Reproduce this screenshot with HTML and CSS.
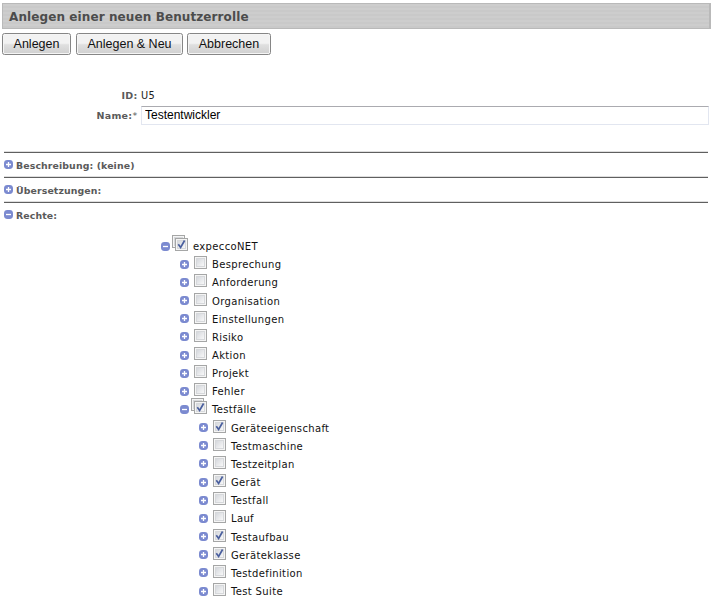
FILE: index.html
```html
<!DOCTYPE html>
<html lang="de">
<head>
<meta charset="utf-8">
<title>Anlegen einer neuen Benutzerrolle</title>
<link rel="stylesheet" href="styles.css">
</head>
<body>
<svg class="defs" width="0" height="0">
  <defs>
    <linearGradient id="fill" x1="0" y1="0" x2="1" y2="1"><stop offset="0" stop-color="#d3d6db"/><stop offset="1" stop-color="#fafafa"/></linearGradient>
    <symbol id="plus" viewBox="0 0 9 9"><rect width="9" height="9" rx="3.4" fill="#7b8ad0"/><path d="M2 4.5h5M4.5 2v5" stroke="#fff" stroke-width="1.3"/></symbol>
    <symbol id="minus" viewBox="0 0 9 9"><rect width="9" height="9" rx="3.4" fill="#7b8ad0"/><path d="M2 4.5h5" stroke="#fff" stroke-width="1.3"/></symbol>
    <symbol id="off" viewBox="0 0 13 13"><rect x=".5" y=".5" width="12" height="12" fill="#f5f5f5" stroke="#a5a6a6"/><rect x="2.5" y="2.5" width="8" height="8" fill="url(#fill)" stroke="#d6d8db"/></symbol>
    <symbol id="on" viewBox="0 0 13 13"><use href="#off" width="13" height="13"/><path d="M3.3 6.2L5.6 9.4L9.6 2.5" fill="none" stroke="#4a5f9e" stroke-width="1.7"/></symbol>
  </defs>
</svg>
<h1 class="title">Anlegen einer neuen Benutzerrolle</h1>
<div class="toolbar">
  <button class="w1">Anlegen</button><button class="w2">Anlegen &amp; Neu</button><button class="w3">Abbrechen</button>
</div>
<div class="form">
  <span class="label">ID:</span><span class="value">U5</span>
  <label class="label" for="name">Name:<span class="required">*</span></label><input id="name" value="Testentwickler">
</div>
<div class="section"><svg class="toggle"><use href="#plus"/></svg><span>Beschreibung: (keine)</span></div>
<div class="section"><svg class="toggle"><use href="#plus"/></svg><span>Übersetzungen:</span></div>
<div class="section"><svg class="toggle"><use href="#minus"/></svg><span>Rechte:</span></div>
<ul class="tree" id="tree"></ul>
<script src="tree.js"></script>
</body>
</html>
```
FILE: tree.js
```js
// [level, label, checked, expanded]
const rows = [
  [0, "expeccoNET", 1, 1],
  [1, "Besprechung"], [1, "Anforderung"], [1, "Organisation"], [1, "Einstellungen"],
  [1, "Risiko"], [1, "Aktion"], [1, "Projekt"], [1, "Fehler"],
  [1, "Testfälle", 1, 1],
  [2, "Geräteeigenschaft", 1], [2, "Testmaschine"], [2, "Testzeitplan"], [2, "Gerät", 1],
  [2, "Testfall"], [2, "Lauf"], [2, "Testaufbau", 1], [2, "Geräteklasse", 1],
  [2, "Testdefinition"], [2, "Test Suite"]
];
document.getElementById("tree").innerHTML = rows.map(([level, label, checked, open]) => `
  <li class="level${level}">
    <svg class="toggle"><use href="#${open ? "minus" : "plus"}"/></svg>
    <span class="check">${open ? '<svg class="back"><use href="#off"/></svg>' : ""}<svg class="box"><use href="#${checked ? "on" : "off"}"/></svg></span>
    <span class="name">${label}</span>
  </li>`).join("");
```
FILE: styles.css
```css
* { box-sizing: border-box; }
body {
  margin: 0;
  height: 599px;
  overflow: hidden;
  background: #fff;
  font-family: "DejaVu Sans", sans-serif;
}
svg { display: block; flex: none; }
.defs { position: absolute; }
.title {
  margin: 3px 1px 0 2px;
  height: 26px;
  padding-left: 6px;
  border: 1px solid #b9b9b9;
  border-right-width: 2px;
  background: repeating-linear-gradient(#cdcdcd 0 2px, #c9c9c9 2px 4px);
  color: #4c4c4c;
  font-size: 12px;
  line-height: 26px;
  letter-spacing: .1px;
  white-space: nowrap;
}
.toolbar { display: flex; gap: 5px; margin: 4px 0 0 2px; }
button {
  height: 22px;
  padding: 0;
  border: 1px solid #868686;
  border-radius: 2.5px;
  box-shadow: inset 0 0 0 1px #f5f5f5;
  background: linear-gradient(#f2f2f2 0 46%, #dfdfdf 54%, #d0d0d0);
  color: #111;
  font: 12.5px/20px "Liberation Sans", sans-serif;
}
.w1 { width: 69px; }
.w2 { width: 107px; }
.w3 { width: 84px; margin-left: -1px; }
.form {
  display: grid;
  grid-template-columns: 137.5px 1fr;
  grid-template-rows: 22px 19px;
  column-gap: 3.5px;
  align-items: center;
  margin: 29px 3px 27px 0;
}
.label { color: #5a5a5a; font-size: 9.5px; font-weight: bold; letter-spacing: .3px; text-align: right; }
.required { font-weight: normal; }
.value { color: #222; font-size: 9.8px; letter-spacing: .3px; }
input {
  width: 100%;
  height: 19px;
  padding: 0 3px 1px;
  border: 1px solid #e2e6f0;
  border-top-color: #ababb0;
  font: 12px "Liberation Sans", sans-serif;
  color: #000;
}
.section {
  display: flex;
  align-items: center;
  gap: 3px;
  height: 25px;
  margin: 0 4px;
  border-top: 1px solid #5f5f5f;
  box-shadow: 0 -1px #dedede;
  color: #5a5a5a;
  font-size: 9.4px;
  font-weight: bold;
  letter-spacing: .1px;
  white-space: nowrap;
}
.section span { padding-top: 1px; }
.section .toggle { margin-top: -1px; }
.toggle { width: 9px; height: 9px; }
.tree { list-style: none; margin: 10px 0 0; padding: 0; }
.tree li {
  display: flex;
  align-items: center;
  height: 18.16px;
  color: #111;
  font-size: 10px;
  letter-spacing: .35px;
  white-space: nowrap;
}
.level0 { padding-left: 160.5px; }
.level1 { padding-left: 179.5px; }
.level2 { padding-left: 198.5px; }
.check { position: relative; width: 13px; height: 13px; margin: -3px 5px 0 5.5px; }
.box, .back { width: 13px; height: 13px; }
.box { position: relative; }
.back { position: absolute; left: -3.5px; top: -3.5px; }
.name { padding-top: 1px; }
```
